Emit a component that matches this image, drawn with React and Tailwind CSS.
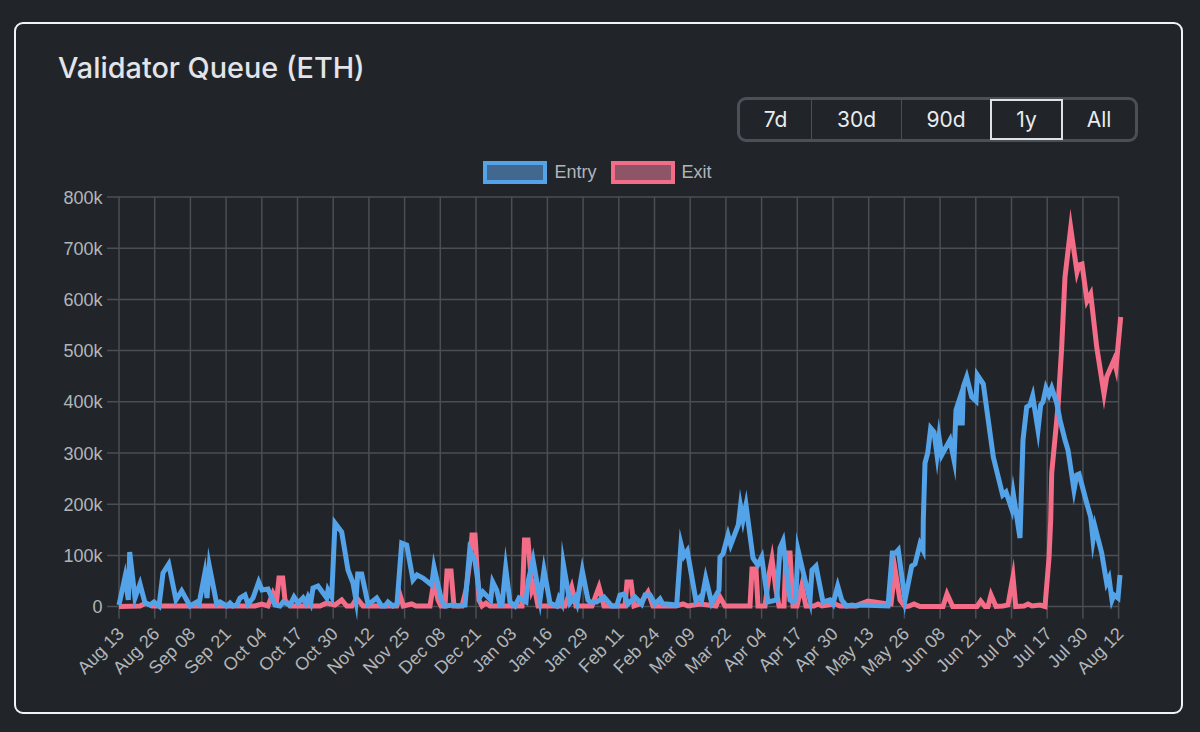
import React from 'react';

const ranges = [
  { label: '7d', w: 'w-[72px]', divider: true },
  { label: '30d', w: 'w-[90px]', divider: true },
  { label: '90d', w: 'w-[88px]' },
  { label: '1y', w: 'w-[73px]', active: true },
  { label: 'All', w: 'w-[72px]' },
];

const dates = [
  'Aug 13', 'Aug 26', 'Sep 08', 'Sep 21', 'Oct 04', 'Oct 17', 'Oct 30', 'Nov 12', 'Nov 25', 'Dec 08',
  'Dec 21', 'Jan 03', 'Jan 16', 'Jan 29', 'Feb 11', 'Feb 24', 'Mar 09', 'Mar 22', 'Apr 04', 'Apr 17',
  'Apr 30', 'May 13', 'May 26', 'Jun 08', 'Jun 21', 'Jul 04', 'Jul 17', 'Jul 30', 'Aug 12',
];

const yLabels = ['800k', '700k', '600k', '500k', '400k', '300k', '200k', '100k', '0'];

const LEFT = 119;
const STEP = 35.7;
const TOP = 197;
const ROW = 51.2;
const ZERO = TOP + 8 * ROW;

// traced by eye from the screenshot, page pixels
const entry = `119,605 125,577 128.3,600 129.7,552 135,598 140,584 145,603 150,605 154,602 159,606 163,573 168.7,564 176,600
181.7,591 190,606 196.7,602 199,604 204.7,574 207,598 209.3,566 216.7,604 220,602 226.7,606 230,603 233,606 236.7,605 240,598
245,595 248,604 253,598 258.7,582 262,590 268,589 275,605 280,606 283,602 290,605 294,597 298,603 303,598 305.7,603 308,597
310.7,603 313,588 318,586 326.7,598 328,590 331.7,597 335,523 341.7,532 348,570 353,583 356,600 357.7,574 361.7,574 368,604
371.7,602 376.7,598 381.7,606 385,606 388,602 393,606 397,604 401.7,543 406.7,545 413,580 417,575 423,578 431.7,585 434,567
441.7,601 445,606 453,605 458,606 465,605 469.7,550 475,561 480,597 483,592 490.7,600 492.7,582 496.7,590 500,605 502,605
505.7,568 510,602 515,606 519,598 526,602 528,582 533,560 540,600 544,570 550,603 556.7,606 559,598 561.7,603 563.3,564
570,603 575,597 577,603 582.3,571 588,600 590,602 596.7,602 604,597 611.7,606 616.7,606 620,595 624,594 628,604 635,597
641.7,604 645,595 650,595 655,604 660,599 662.7,604 666.7,604 676.7,605 681,544 684,556 687.3,551 696,601 700,597 701.7,600
705.7,578 711.7,603 719,590 720,557 723,554 728,535 730.7,545 738.3,525 740.5,506 743,520 746,505 753,558 757.7,565 761.7,557
768,602 776.7,600 780,548 783,541 790,600 793,602 795.7,600 798,550 805,580 810,600 812,570 816,566 823,602 830,600 833,604
837.7,586 841.7,600 846.7,606 852,605 856.7,606 860,605 888,606 892.3,553 895.7,553 898.3,550 905,600 911.7,566 915,564
920,544 923,550 923.3,520 925,463 927.7,453 930.7,428 934,432 937,455 939,437 941.7,455 950,440 954,460 956,410 959.3,400 960,423
962.3,423 963.3,387 966.7,377 971.7,397 976,401 977.3,375 983.3,384 993.3,457 1002.7,495 1006,492 1011.7,509 1013.3,494 1020,538
1023,440 1026.7,407 1030,405 1032.7,396 1038,430 1040.7,405 1043,402 1046,388 1049,395 1051.7,388 1056.7,403 1060,420 1065,440
1068,450 1074,490 1076.7,475 1079,474 1086.7,503 1090.7,517 1093,540 1095,527 1101.7,553 1106.7,583 1109,578 1112,600 1114,595
1118,598 1120,575`;

const exit = `119,606.5 140,606 146,603 152,606 255,606 261.7,604 268,606 273,593 276.7,600 279,578 282.7,578 285,600 290,606 320,606
326.7,603 335,605 341.7,600 346.7,606 352,606 356.7,598 363,606 396.7,606 400,595 403.3,606 411.7,604 416,606 430,606 434,581
438,600 441,606 445,606 447,571 451,571 454,606 462,606 466,590 470,560 472,535 475,535 479,600 482,606 486,603 490,606 522,606
524.5,540 528,540 532,590 534,585 538,606 565,606 571.7,587 576,606 592,606 599,587 604,606 625,606 627,582 631,582 634,606
640,604 648,592 653,606 676,606 683,604 688,606 700,604 716,606 720,597 725,606 750,606 752,569 756,569 758,606 765,606 769,575
772,559 776,590 779,606 784,606 786,553 790,553 793,606 797,606 801.7,586 806,606 814,606 818,604 822,606 835,604 840,606 855,606
860,604 868,601 888,604 891,604 895,569 900,600 905,606.5 909,606 914,604 920,606.5 943,606.5 947,594 952.7,606.5 977,606.5
980.7,601 985,606.5 988,606.5 991,595 996,606.5 1003,606 1008,605 1013,577 1015.7,606.5 1024,606 1028,604 1032,606 1040,605
1045,606.5 1049,558 1050.7,520 1051.7,473 1058,407 1061.7,347 1065,277 1070.7,228 1077,272 1079,265 1082,264 1087,301 1090.7,294
1096.7,347 1104,394 1106.7,377 1114,360 1116,368 1120.7,317`;

const LegendItem = ({ label, box }) => (
  <div className="flex items-center gap-[7px]">
    <span className={`w-[64px] h-[23px] border-4 ${box}`}></span>
    <span className="text-[18px] leading-[23px] text-[#b1b5b9]">{label}</span>
  </div>
);

const QueueChart = () => (
  <svg viewBox="16 184 1165 528" className="block w-[1165px] h-[528px]">
    <g stroke="#4b4e52" strokeWidth="1.5">
      {yLabels.map((_, i) => (
        <line key={i} x1={LEFT - 12} x2={LEFT + 1000} y1={TOP + i * ROW} y2={TOP + i * ROW} />
      ))}
      {dates.map((_, i) => (
        <line key={i} x1={LEFT + i * STEP} x2={LEFT + i * STEP} y1={TOP} y2={ZERO + 12} />
      ))}
    </g>
    <g fill="#b1b5b9" fontSize="18">
      {yLabels.map((label, i) => (
        <text key={label} x="102.5" y={TOP + i * ROW + 6.5} textAnchor="end">{label}</text>
      ))}
      {dates.map((label, i) => {
        const x = LEFT + i * STEP + 6;
        return (
          <text key={label} x={x} y="635" textAnchor="end" transform={`rotate(-45 ${x} 635)`}>{label}</text>
        );
      })}
    </g>
    <polyline points={exit} fill="none" stroke="#f36d88" strokeWidth="5" strokeLinejoin="miter" strokeMiterlimit="10" />
    <polyline points={entry} fill="none" stroke="#54a2e8" strokeWidth="5" strokeLinejoin="miter" strokeMiterlimit="10" />
  </svg>
);

const App = () => {
  return (
    <div className="w-[1200px] h-[732px] bg-[#212529] pt-[22px] pl-[14px] font-['Inter',sans-serif] overflow-hidden">
      <div className="w-[1169px] h-[692px] border-2 border-[#f1f3f5] rounded-[9px]">
        <h2 className="pl-[42px] pt-[26px] text-[28.8px] leading-[36px] font-medium text-[#e2e4e8]">Validator Queue (ETH)</h2>
        <div className="flex justify-end pr-[43px] mt-[11px]">
          <div className="flex h-[45px] border-[3px] border-[#495057] rounded-[9px]">
            {ranges.map((r) => (
              <button
                key={r.label}
                className={`${r.w} text-[21px] text-[#e9ecef] ${
                  r.active ? 'border-2 border-[#dee2e6] -my-px' : r.divider ? 'border-r border-[#495057]' : ''
                }`}
              >
                {r.label}
              </button>
            ))}
          </div>
        </div>
        <div className="flex justify-center gap-[14px] mt-[19px] font-['Liberation_Sans',sans-serif] pr-[2px]">
          <LegendItem label="Entry" box="border-[#54a2e8] bg-[#42688f]" />
          <LegendItem label="Exit" box="border-[#f36d88] bg-[#8e5468]" />
        </div>
        <div className="font-['Liberation_Sans',sans-serif]">
          <QueueChart />
        </div>
      </div>
    </div>
  );
};

export default App;
